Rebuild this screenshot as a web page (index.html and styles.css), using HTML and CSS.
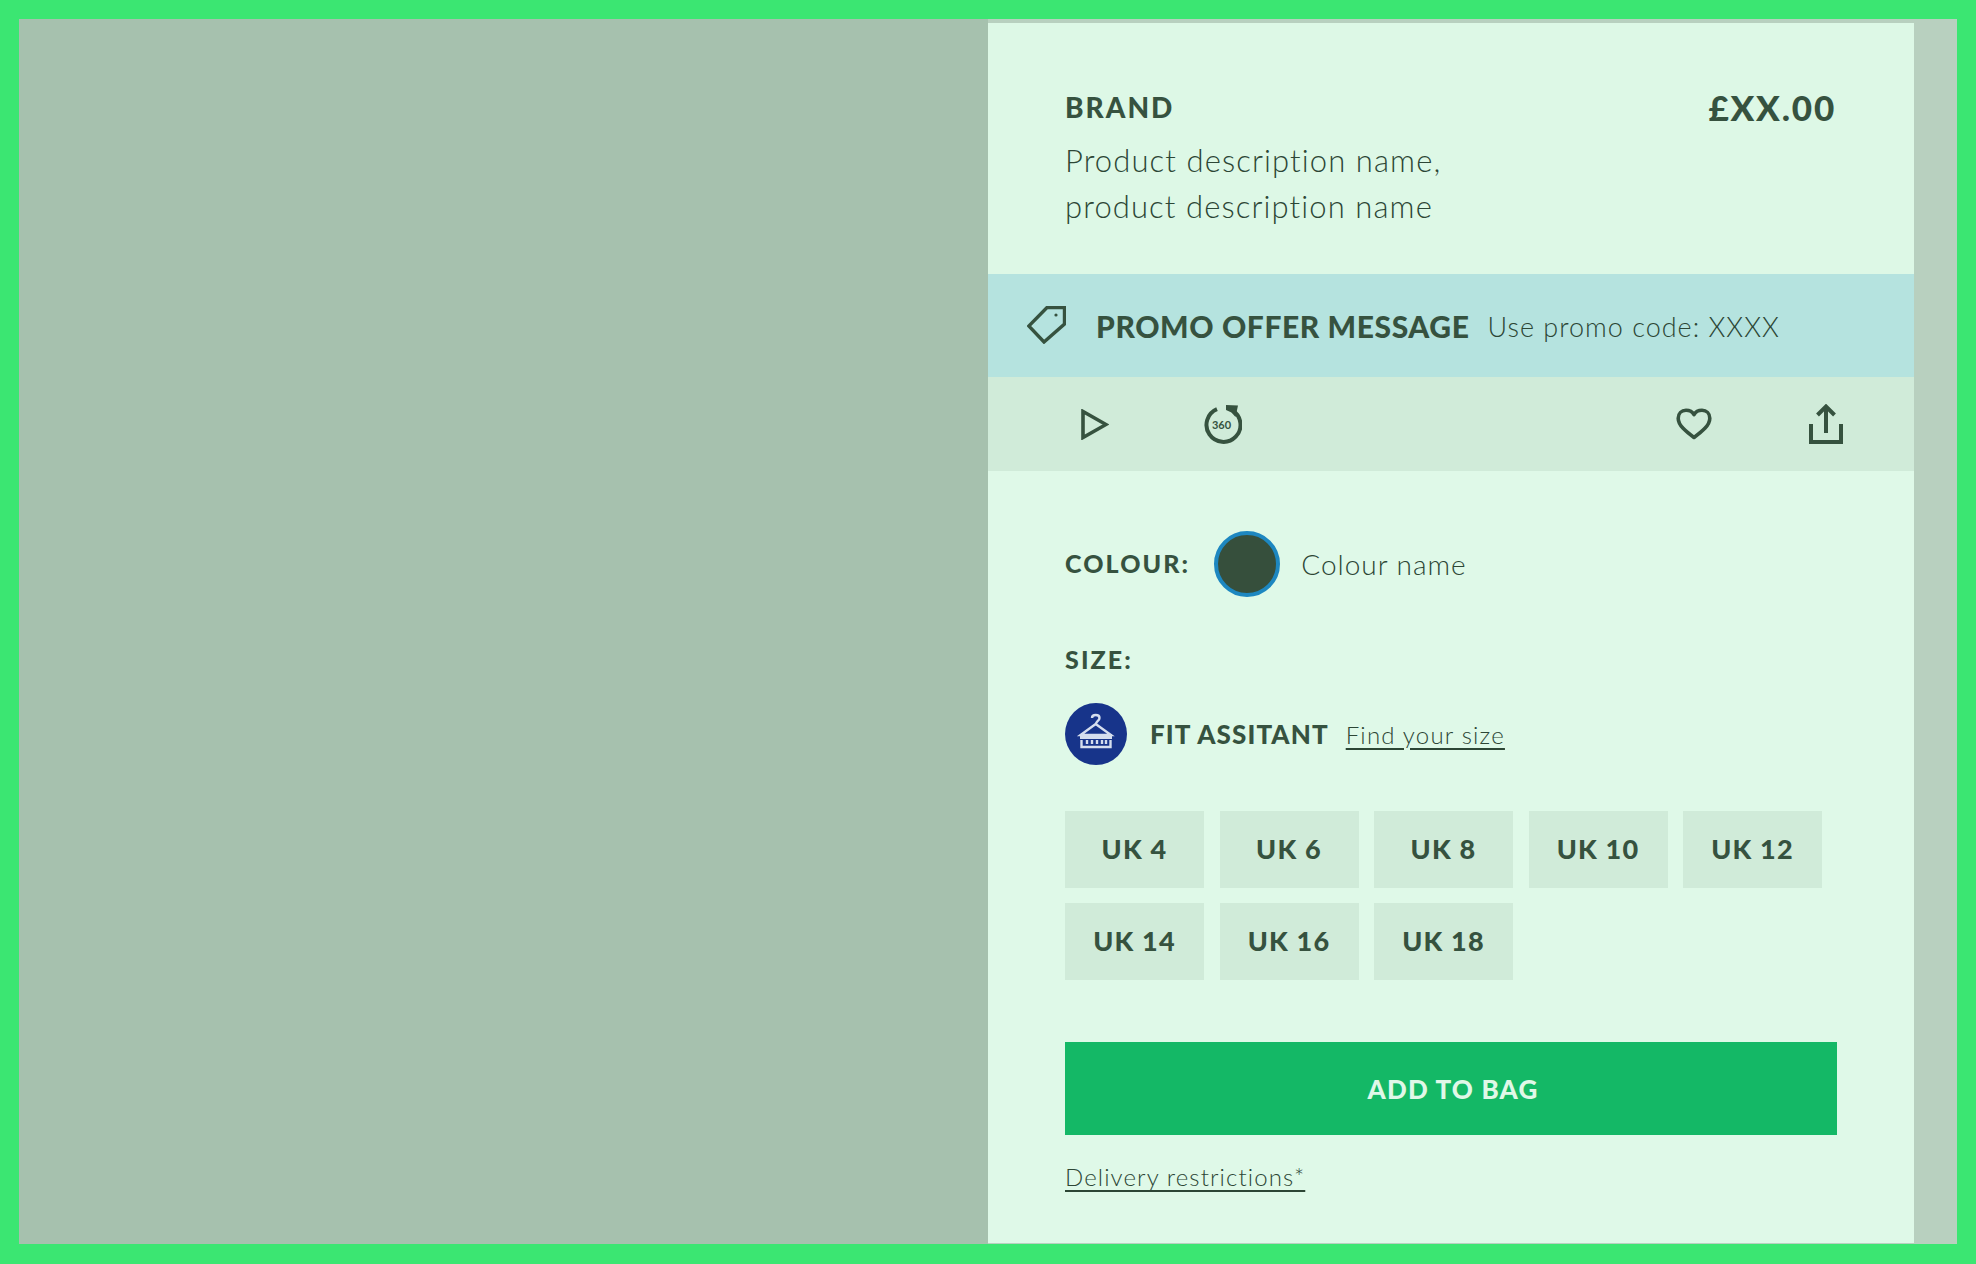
FILE: index.html
```html
<!DOCTYPE html>
<html lang="en">
<head>
    <meta charset="UTF-8">
    <title>Product details</title>
    <link rel="stylesheet" href="styles.css">
</head>
<body>
    <div class="stage">
        <div class="product-image"></div>
        <div class="side">
            <div class="panel">
                <div class="header">
                    <div class="header-text">
                        <div class="brand">BRAND</div>
                        <div class="description">Product description name,<br>product description name</div>
                    </div>
                    <div class="price">£XX.00</div>
                </div>
                <div class="promo">
                    <svg class="tag-icon" width="39" height="38" viewBox="0 0 39 38">
                        <path d="M20 1.5H37.5V18L17 36 1.8 20Z" fill="none" stroke="#36523f" stroke-width="3.400"/>
                        <circle cx="29" cy="9" r="1.6" fill="#36523f"/>
                    </svg>
                    <span class="promo-title">PROMO OFFER MESSAGE</span>
                    <span class="promo-code">Use promo code: XXXX</span>
                </div>
                <div class="toolbar">
                    <div class="toolbar-group">
                        <svg class="play-icon" width="28" height="31" viewBox="0 0 28 31">
                            <path d="M2 2.5V28.500L25 15.500Z" fill="none" stroke="#36523f" stroke-width="3.600"/>
                        </svg>
                        <svg class="spin-icon" width="40" height="40" viewBox="0 0 40 40">
                            <path d="M15 5.200A17 17 0 1 0 30.500 6.500" fill="none" stroke="#36523f" stroke-width="4"/>
                            <path d="M24 1 36 1.500 33.500 13 29.500 8.500 24 6Z" fill="#36523f"/>
                            <text x="19.500" y="25" class="spin-text">360</text>
                        </svg>
                    </div>
                    <div class="toolbar-group">
                        <svg class="heart-icon" width="36" height="32" viewBox="0 0 36 32">
                            <path d="M18 29.500C10 23.500 2.200 17.500 2.200 10.200 2.200 5.400 5.600 2.200 10 2.200 13.400 2.200 16.400 3.600 18 6.600 19.600 3.600 22.600 2.200 26 2.200 30.400 2.200 33.800 5.400 33.800 10.200 33.800 17.500 26 23.500 18 29.500Z" fill="none" stroke="#36523f" stroke-width="3.600" stroke-linejoin="round"/>
                        </svg>
                        <svg class="share-icon" width="34" height="40" viewBox="0 0 34 40">
                            <path d="M2 20V38H32V20" fill="none" stroke="#36523f" stroke-width="4"/>
                            <path d="M17 29V3M8.500 11 17 2.500 25.500 11" fill="none" stroke="#36523f" stroke-width="4"/>
                        </svg>
                    </div>
                </div>
                <div class="options">
                    <div class="colour-row">
                        <span class="label colour-label">COLOUR:</span>
                        <span class="swatch"></span>
                        <span class="colour-name">Colour name</span>
                    </div>
                    <div class="label size-label">SIZE:</div>
                    <div class="fit-row">
                        <span class="fit-badge">
                            <svg width="62" height="62" viewBox="0 0 62 62">
                                <path d="M27 15C27 11 34.500 11 34.500 15 34.500 18 30.700 18 30.700 22" fill="none" stroke="#d5deee" stroke-width="2.400"/>
                                <path d="M30.700 21 46 32H15.500Z" fill="none" stroke="#d5deee" stroke-width="2.400"/>
                                <rect x="15" y="31" width="32" height="5" fill="#d5deee"/>
                                <path d="M16.500 37V44H45.500V37M22 37V41M27 37V41M32 37V41M37 37V41M41 37V41" fill="none" stroke="#d5deee" stroke-width="2.400"/>
                            </svg>
                        </span>
                        <span class="fit-title">FIT ASSITANT</span>
                        <a class="fit-link" href="#">Find your size</a>
                    </div>
                    <div class="sizes">
                        <button class="size">UK 4</button>
                        <button class="size">UK 6</button>
                        <button class="size">UK 8</button>
                        <button class="size">UK 10</button>
                        <button class="size">UK 12</button>
                        <button class="size">UK 14</button>
                        <button class="size">UK 16</button>
                        <button class="size">UK 18</button>
                    </div>
                    <button class="add-to-bag">ADD TO BAG</button>
                    <a class="delivery" href="#">Delivery restrictions*</a>
                </div>
            </div>
        </div>
    </div>
</body>
</html>
```

FILE: styles.css
```css
* {
    box-sizing: border-box;
}
body {
    margin: 0;
    height: 1264px;
    padding: 19px 19px 20px;
    background-color: #3be672;
    font-family: Lato, "Liberation Sans", sans-serif;
    color: #36523f;
}
.stage {
    display: flex;
    height: 100%;
}
.product-image {
    width: 969px;
    background-color: #a6c1ae;
}
.side {
    flex: 1;
    padding: 4px 0 1px;
    background-color: #b8d0bf;
}
.panel {
    width: 926px;
    height: 100%;
    display: flex;
    flex-direction: column;
    background-color: #ddf8e6;
}
.header {
    height: 251px;
    padding: 66px 78px 0 77px;
    display: flex;
    justify-content: space-between;
    align-items: flex-start;
}
.brand {
    font-size: 28px;
    line-height: 36px;
    font-weight: 900;
    letter-spacing: 2px;
}
.description {
    margin-top: 12px;
    font-size: 31px;
    line-height: 46px;
    font-weight: 300;
    letter-spacing: 1.1px;
    color: #2c4635;
}
.price {
    margin-top: -4px;
    font-size: 35px;
    line-height: 44px;
    font-weight: 900;
    letter-spacing: 1.8px;
}
.promo {
    height: 103px;
    padding-left: 39px;
    display: flex;
    align-items: center;
    background-color: #b5e3df;
}
.tag-icon {
    margin-right: 30px;
    margin-top: -1px;
}
.promo-title {
    font-size: 30px;
    font-weight: 900;
    letter-spacing: 0.6px;
    margin-right: 18px;
}
.promo-code {
    margin-top: 2px;
    font-size: 27px;
    font-weight: 300;
    letter-spacing: 1px;
    color: #2c4635;
}
.toolbar {
    height: 94px;
    padding: 0 71px 0 93px;
    display: flex;
    justify-content: space-between;
    align-items: center;
    background-color: #d0ebd9;
}
.toolbar-group {
    display: flex;
    align-items: center;
}
.play-icon {
    margin-right: 93px;
}
.heart-icon {
    margin-right: 97px;
}
.spin-text {
    font-size: 11px;
    font-weight: 700;
    text-anchor: middle;
    fill: #36523f;
}
.options {
    flex: 1;
    padding: 60px 77px 0;
    background-color: #dff9e8;
}
.colour-row {
    display: flex;
    align-items: center;
    height: 66px;
}
.label {
    font-size: 25px;
    font-weight: 900;
    letter-spacing: 2.1px;
}
.colour-label {
    margin-top: -2px;
}
.swatch {
    width: 66px;
    height: 66px;
    margin: 0 21px 0 24px;
    border-radius: 50%;
    background-color: #364f3c;
    border: 4px solid #1d87c0;
}
.colour-name {
    font-size: 28px;
    font-weight: 300;
    letter-spacing: 1px;
    color: #2c4635;
}
.size-label {
    margin-top: 46px;
    line-height: 32px;
}
.fit-row {
    display: flex;
    align-items: center;
    margin-top: 28px;
    height: 62px;
}
.fit-badge {
    width: 62px;
    height: 62px;
    margin-right: 23px;
    border-radius: 50%;
    background-color: #17348a;
}
.fit-title {
    font-size: 26px;
    font-weight: 900;
    letter-spacing: 1.1px;
    margin-right: 17px;
}
.fit-link,
.delivery {
    color: #2c4635;
    font-weight: 300;
    text-decoration: underline;
    text-decoration-thickness: 2px;
    text-underline-offset: 4px;
}
.fit-link {
    font-size: 24px;
    letter-spacing: 1.2px;
}
.sizes {
    display: flex;
    flex-wrap: wrap;
    gap: 15px 15.5px;
    margin-top: 46px;
}
.size {
    width: 139px;
    height: 77px;
    padding: 0 0 2px;
    border: none;
    background-color: #d0ebd9;
    color: #36523f;
    font-family: inherit;
    font-size: 27px;
    font-weight: 900;
    letter-spacing: 1.2px;
}
.add-to-bag {
    display: block;
    width: 772px;
    height: 93px;
    margin-top: 62px;
    padding: 0 0 0 4px;
    border: none;
    background-color: #14b866;
    color: #e0f8e8;
    font-family: inherit;
    font-size: 26px;
    font-weight: 900;
    letter-spacing: 1.2px;
}
.delivery {
    display: inline-block;
    margin-top: 25px;
    font-size: 24px;
    line-height: 34px;
    letter-spacing: 1.1px;
}
```
